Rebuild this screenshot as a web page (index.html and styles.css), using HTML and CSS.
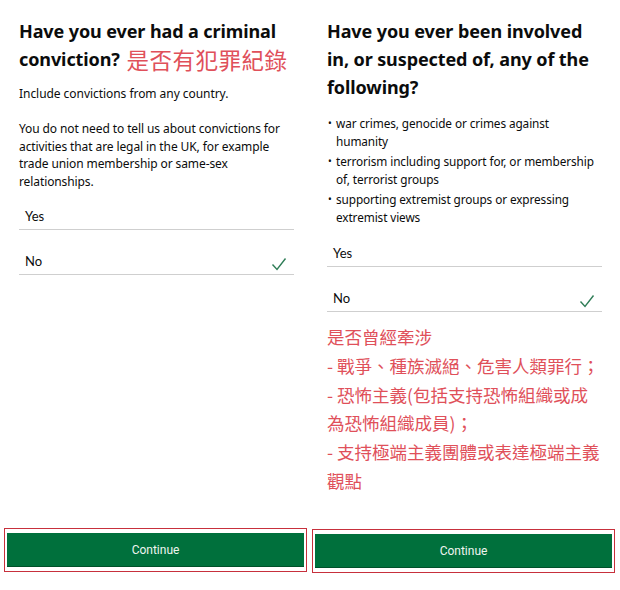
FILE: index.html
```html
<!DOCTYPE html>
<html lang="en">
<head>
<meta charset="utf-8">
<title>Questions</title>
<link rel="stylesheet" href="styles.css">
</head>
<body>
<div class="screens">
  <section class="screen screen-left">
    <div class="content">
      <h1 class="title"><span>Have you ever had a criminal</span> <span>conviction?</span> <span class="zh-inline">是否有犯罪紀錄</span></h1>
      <p class="lead">Include convictions from any country.</p>
      <p class="body">You do not need to tell us about convictions for activities that are legal in the UK, for example trade union membership or same-sex relationships.</p>
      <div class="options">
        <div class="opt first"><span>Yes</span></div>
        <div class="opt"><span>No</span>
          <svg class="tick" width="16" height="14" viewBox="0 0 16 14"><polyline points="1.5,7.5 6,12.5 14.5,1.5" fill="none" stroke="#2f7d57" stroke-width="1.4"/></svg>
        </div>
      </div>
    </div>
    <div class="btn-frame"><div class="btn">Continue</div></div>
  </section>

  <section class="screen screen-right">
    <div class="content">
      <h1 class="title">Have you ever been involved in, or suspected of, any of the following?</h1>
      <ul class="bullets">
        <li><span class="dot">•</span><span>war crimes, genocide or crimes against humanity</span></li>
        <li><span class="dot">•</span><span>terrorism including support for, or membership of, terrorist groups</span></li>
        <li><span class="dot">•</span><span>supporting extremist groups or expressing extremist views</span></li>
      </ul>
      <div class="options">
        <div class="opt first"><span>Yes</span></div>
        <div class="opt"><span>No</span>
          <svg class="tick" width="16" height="14" viewBox="0 0 16 14"><polyline points="1.5,7.5 6,12.5 14.5,1.5" fill="none" stroke="#2f7d57" stroke-width="1.4"/></svg>
        </div>
      </div>
      <div class="zh-note">
        <span class="zh-line">是否曾經牽涉</span>
        <span class="zh-line">- 戰爭、種族滅絕、危害人類罪行；</span>
        <span class="zh-line">- 恐怖主義(包括支持恐怖組織或成<br>為恐怖組織成員)；</span>
        <span class="zh-line">- 支持極端主義團體或表達極端主義<br>觀點</span>
      </div>
    </div>
    <div class="btn-frame"><div class="btn">Continue</div></div>
  </section>
</div>
</body>
</html>
```

FILE: styles.css
```css
html, body {
  margin: 0;
  padding: 0;
  background: #ffffff;
}

.screens {
  display: flex;
  width: 620px;
  height: 590px;
  font-family: "Noto Sans", "Open Sans", sans-serif;
  color: #0b0c0c;
}

.screen {
  width: 310px;
  height: 590px;
  display: flex;
  flex-direction: column;
  box-sizing: border-box;
}

.screen-left {
  padding: 17px 16px 18px 19px;
}

.screen-right {
  padding: 17px 18px 17px 17px;
}

.content {
  display: flex;
  flex-direction: column;
}

.title {
  margin: 0;
  font-size: 18px;
  line-height: 28px;
  font-weight: 700;
  letter-spacing: -0.1px;
}

.zh-inline {
  display: inline-block;
  height: 28px;
  line-height: 28px;
  vertical-align: top;
  margin-left: 2px;
  font-family: "Noto Sans CJK TC", sans-serif;
  font-weight: 400;
  font-size: 22.5px;
  color: #e0505a;
  letter-spacing: 0.5px;
}

.lead {
  margin: 12px 0 0;
  font-size: 12px;
  line-height: 18px;
  letter-spacing: -0.05px;
}

.body {
  margin: 17px 0 0;
  font-size: 12px;
  line-height: 17.7px;
  letter-spacing: -0.1px;
}

.options {
  display: flex;
  flex-direction: column;
}

.opt {
  display: flex;
  justify-content: space-between;
  align-items: flex-end;
  padding: 22px 7px 4px 6px;
  border-bottom: 1.5px solid #cfcfcf;
  font-family: Lato, "Noto Sans", sans-serif;
  font-size: 13px;
  line-height: 18px;
}

.opt.first {
  padding-top: 16px;
}

.screen-right .opt.first {
  padding-top: 18px;
}

.tick {
  display: block;
  margin-bottom: -1px;
}

.bullets {
  list-style: none;
  margin: 13px 0 0;
  padding: 0;
  display: flex;
  flex-direction: column;
  gap: 2px;
  font-size: 11.8px;
  line-height: 18px;
  letter-spacing: -0.1px;
}

.bullets li {
  display: flex;
}

.dot {
  width: 8px;
  flex: none;
  font-size: 10px;
  padding-left: 1px;
}

.zh-note {
  margin-top: 11px;
  display: flex;
  flex-direction: column;
  font-family: "Noto Sans CJK TC", sans-serif;
  font-size: 17.5px;
  line-height: 28.8px;
  color: #e0505a;
}

.btn-frame {
  margin-top: auto;
  width: 303px;
  box-sizing: border-box;
  border: 1.5px solid #c7303c;
  padding: 4px 2px;
  background: #ffffff;
}

.screen-left .btn-frame {
  margin-left: -15px;
}

.screen-right .btn-frame {
  margin-left: -15px;
}

.btn {
  height: 34px;
  background: #00703c;
  box-shadow: inset 0 -1px 0 #00502a;
  color: #eef5ef;
  font-family: Roboto, "Noto Sans", sans-serif;
  font-size: 12px;
  display: flex;
  align-items: center;
  justify-content: center;
}
```
